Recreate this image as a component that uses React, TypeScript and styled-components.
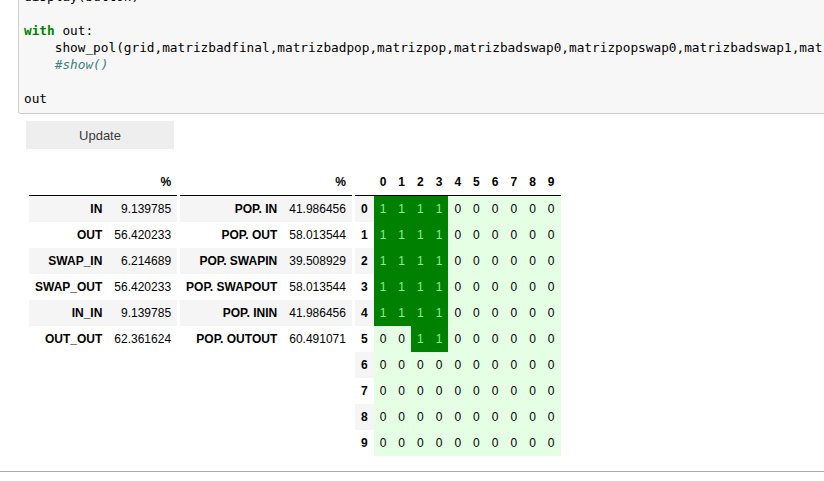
import React from "react";
import styled, { createGlobalStyle } from "styled-components";

const Global = createGlobalStyle`
  html, body { margin: 0; padding: 0; background: #fff; }
  body { overflow: hidden; width: 824px; height: 481px; }
`;

const Page = styled.div`
  width: 824px;
  height: 481px;
  overflow: hidden;
  display: flex;
  flex-direction: column;
`;

const CodeCell = styled.div`
  margin: -20px -300px 0 18px;
  background: #f7f7f7;
  border: 1px solid #cfcfcf;
  border-radius: 2px;
  padding: 7px 0 6px 5px;
  font-family: "DejaVu Sans Mono", "Liberation Mono", monospace;
  font-size: 12.75px;
  line-height: 17px;
  color: #000;
  white-space: pre;
`;

const Line = styled.div`
  height: 17px;
`;

const Kw = styled.span`
  color: #008000;
  font-weight: bold;
`;

const Comment = styled.span`
  color: #408080;
  font-style: italic;
`;

const Output = styled.div`
  padding: 7px 0 0 26px;
  display: flex;
  flex-direction: column;
  align-items: flex-start;
`;

const Button = styled.button`
  width: 148px;
  height: 28px;
  border: none;
  background: #eeeeee;
  font-family: "Liberation Sans", Arial, sans-serif;
  font-size: 13px;
  color: rgba(0, 0, 0, 0.8);
  padding: 0;
  margin: 0;
`;

const Tables = styled.div`
  margin: 20px 0 0 3px;
  display: flex;
  align-items: flex-start;
  gap: 3px;
`;

const Table = styled.table`
  border-collapse: collapse;
  border-spacing: 0;
  font-family: "Liberation Sans", Arial, sans-serif;
  font-size: 12px;
  color: #000;
`;

const THead = styled.thead`
  border-bottom: 1px solid #000;
  vertical-align: bottom;
`;

const Row = styled.tr<{ $striped?: boolean }>`
  background: ${(p) => (p.$striped ? "#f5f5f5" : "transparent")};
`;

const Th = styled.th`
  text-align: right;
  vertical-align: middle;
  padding: 6px;
  line-height: 14px;
  font-weight: bold;
  white-space: nowrap;
`;

const IndexTh = styled.th<{ $striped?: boolean }>`
  text-align: right;
  vertical-align: middle;
  padding: 6px;
  line-height: 14px;
  font-weight: bold;
  white-space: nowrap;
  background: ${(p) => (p.$striped ? "#f5f5f5" : "transparent")};
`;

const Td = styled.td`
  text-align: right;
  vertical-align: middle;
  padding: 6px;
  line-height: 14px;
  white-space: nowrap;
`;

const Cell = styled.td<{ $on: boolean }>`
  text-align: right;
  vertical-align: middle;
  padding: 6px;
  line-height: 14px;
  white-space: nowrap;
  background: ${(p) => (p.$on ? "#008000" : "#e5ffe5")};
  color: ${(p) => (p.$on ? "#90ee90" : "#000")};
`;

const BottomRule = styled.div`
  margin-top: 15px;
  height: 1px;
  background: #ababab;
  width: 100%;
`;

const stats1: [string, string][] = [
  ["IN", "9.139785"],
  ["OUT", "56.420233"],
  ["SWAP_IN", "6.214689"],
  ["SWAP_OUT", "56.420233"],
  ["IN_IN", "9.139785"],
  ["OUT_OUT", "62.361624"],
];

const stats2: [string, string][] = [
  ["POP. IN", "41.986456"],
  ["POP. OUT", "58.013544"],
  ["POP. SWAPIN", "39.508929"],
  ["POP. SWAPOUT", "58.013544"],
  ["POP. ININ", "41.986456"],
  ["POP. OUTOUT", "60.491071"],
];

const grid: number[][] = Array.from({ length: 10 }, (_, r) =>
  Array.from({ length: 10 }, (_, c) => {
    if (r <= 4 && c <= 3) return 1;
    if (r === 5 && (c === 2 || c === 3)) return 1;
    return 0;
  })
);

function StatTable({ rows }: { rows: [string, string][] }) {
  return (
    <Table>
      <THead>
        <tr>
          <Th />
          <Th>%</Th>
        </tr>
      </THead>
      <tbody>
        {rows.map(([k, v], i) => (
          <Row key={k} $striped={i % 2 === 0}>
            <Th>{k}</Th>
            <Td>{v}</Td>
          </Row>
        ))}
      </tbody>
    </Table>
  );
}

function GridTable() {
  return (
    <Table>
      <THead>
        <tr>
          <Th />
          {grid[0].map((_, c) => (
            <Th key={c}>{c}</Th>
          ))}
        </tr>
      </THead>
      <tbody>
        {grid.map((row, r) => (
          <tr key={r}>
            <IndexTh $striped={r % 2 === 0}>{r}</IndexTh>
            {row.map((v, c) => (
              <Cell key={c} $on={v === 1}>
                {v}
              </Cell>
            ))}
          </tr>
        ))}
      </tbody>
    </Table>
  );
}

export default function App() {
  return (
    <Page>
      <Global />
      <CodeCell>
        <Line>display(button)</Line>
        <Line> </Line>
        <Line>
          <Kw>with</Kw> out:
        </Line>
        <Line>
          {"    "}show_pol(grid,matrizbadfinal,matrizbadpop,matrizpop,matrizbadswap0,matrizpopswap0,matrizbadswap1,matrizpopswap1)
        </Line>
        <Line>
          {"    "}
          <Comment>#show()</Comment>
        </Line>
        <Line> </Line>
        <Line>out</Line>
      </CodeCell>
      <Output>
        <Button>Update</Button>
        <Tables>
          <StatTable rows={stats1} />
          <StatTable rows={stats2} />
          <GridTable />
        </Tables>
      </Output>
      <BottomRule />
    </Page>
  );
}
